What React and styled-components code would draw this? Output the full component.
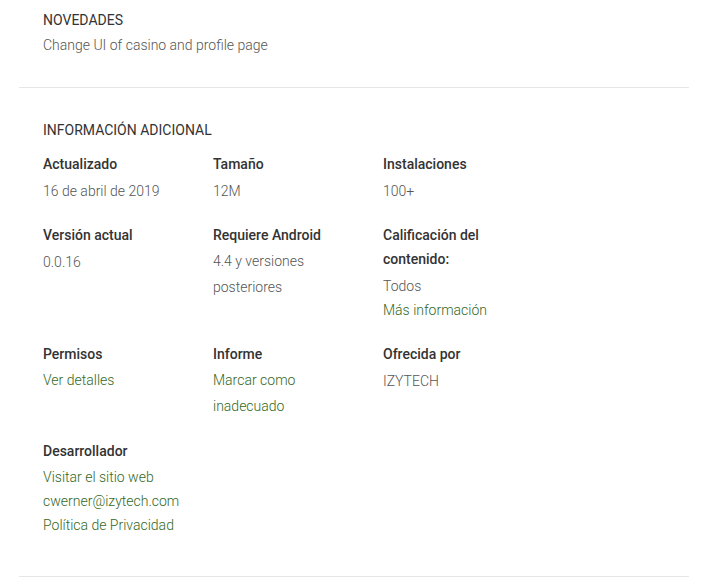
import React from 'react'
import styled, { createGlobalStyle } from 'styled-components';

const GlobalStyle = createGlobalStyle`
  body{
    margin:0;
    background:#fff;
    font-family: Roboto, "Noto Sans", Arial, sans-serif;
  }
`;

const Page = styled.div`
  width:670px;
  margin-left:19px;
`;

const Section = styled.section`
  padding:${p => p.$top}px 0 ${p => p.$bottom}px 24px;
  border-bottom:1px solid #e6e6e6;
`;

const Heading = styled.h2`
  margin:0;
  font-size:14px;
  line-height:24px;
  font-weight:400;
  color:#333;
  text-transform: uppercase;
`;

const Text = styled.div`
  margin-top:1px;
  font-size:14px;
  font-weight:300;
  line-height:24px;
  color:#555;
`;

const Grid = styled.div`
  margin-top:10px;
  display:grid;
  grid-template-columns: repeat(3, 170px);
  row-gap:20px;
  align-items:start;
`;

const Item = styled.div`
  width:140px;
  font-size:14px;
`;

const Label = styled.div`
  font-weight:500;
  color:#333;
  line-height:24px;
`;

const Value = styled.div`
  margin-top:${p => p.$multi ? 1 : p.$link ? 2 : 3}px;
  line-height:${p => p.$multi ? 26 : 24}px;
  font-weight:300;
  color:#555;
`;

const Link = styled.a`
  display:block;
  color:#33691e;
  text-decoration:none;
  line-height:${p => p.$multi ? 26 : 24}px;
  cursor:pointer;
`;

const info = [
  { label: 'Actualizado', value: '16 de abril de 2019' },
  { label: 'Tamaño', value: '12M' },
  { label: 'Instalaciones', value: '100+' },
  { label: 'Versión actual', value: '0.0.16' },
  { label: 'Requiere Android', value: '4.4 y versiones posteriores', multi: true },
  { label: 'Calificación del contenido:', value: 'Todos', links: ['Más información'] },
  { label: 'Permisos', links: ['Ver detalles'] },
  { label: 'Informe', links: ['Marcar como inadecuado'], multi: true },
  { label: 'Ofrecida por', value: 'IZYTECH' },
  { label: 'Desarrollador', links: ['Visitar el sitio web', 'cwerner@izytech.com', 'Política de Privacidad'] },
];

export default function App() {
  return (
    <Page>
      <GlobalStyle />
      <Section $top={8} $bottom={30}>
        <Heading>Novedades</Heading>
        <Text>Change UI of casino and profile page</Text>
      </Section>
      <Section $top={30} $bottom={39}>
        <Heading>Información adicional</Heading>
        <Grid>
          {info.map(item => (
            <Item key={item.label}>
              <Label>{item.label}</Label>
              <Value $multi={item.multi} $link={!item.value}>
                {item.value && <div>{item.value}</div>}
                {item.links && item.links.map(l => (
                  <Link key={l} $multi={item.multi}>{l}</Link>
                ))}
              </Value>
            </Item>
          ))}
        </Grid>
      </Section>
    </Page>
  )
}
